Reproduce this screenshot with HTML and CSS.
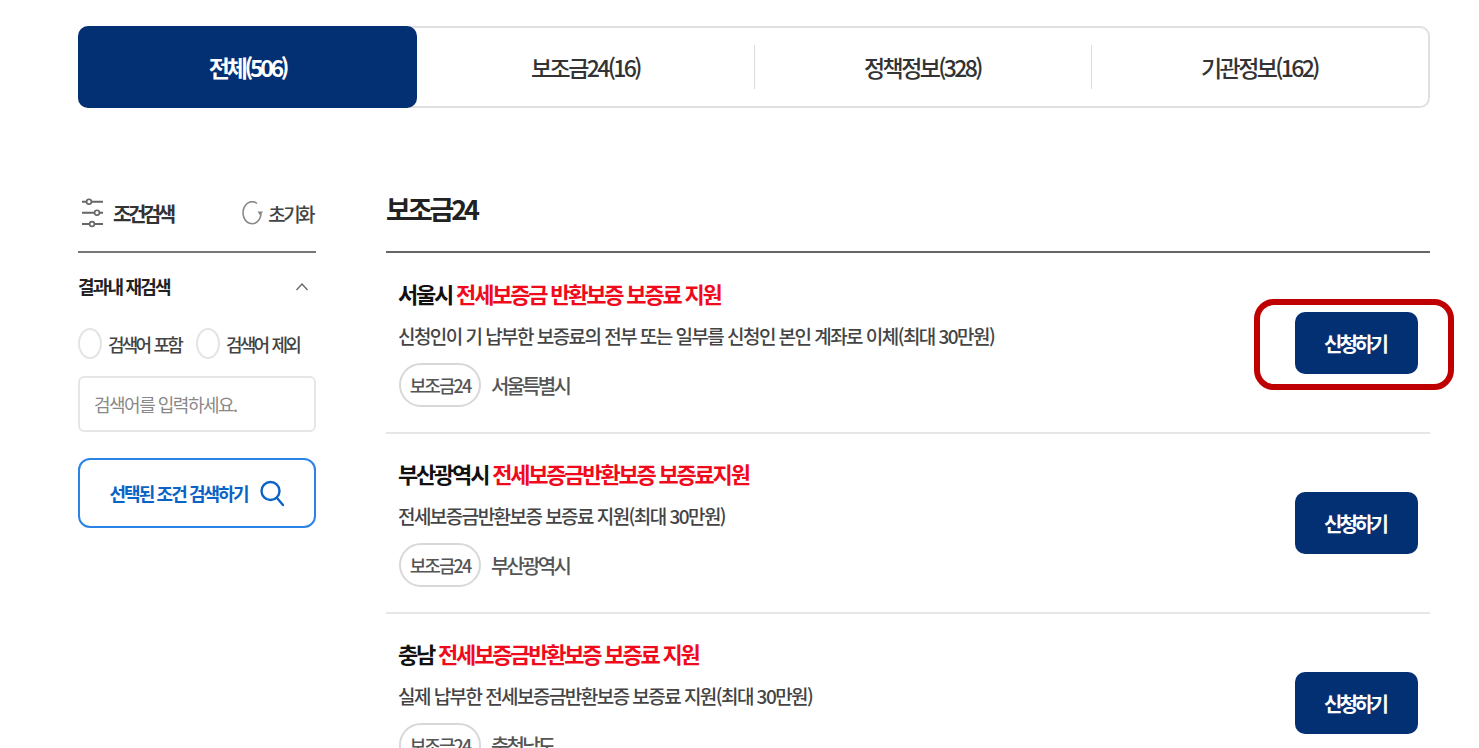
FILE: index.html
```html
<!DOCTYPE html>
<html lang="ko">
<head>
    <meta charset="UTF-8">
    <meta name="viewport" content="width=device-width, initial-scale=1.0">
    <title>보조금24 검색결과</title>
    <link rel="stylesheet" href="styles.css">
</head>
<body>
    <!-- Tabs -->
    <nav class="tabs">
        <a class="tab active" href="#all">전체(506)</a>
        <a class="tab" href="#subsidy">보조금24(16)</a>
        <a class="tab divided" href="#policy">정책정보(328)</a>
        <a class="tab divided" href="#agency">기관정보(162)</a>
    </nav>

    <div class="content">
        <!-- Sidebar -->
        <aside class="sidebar">
            <div class="filter-head">
                <h2 class="filter-title">
                    <svg class="icon-filter" width="24" height="30" viewBox="0 0 24 30" fill="none" stroke="#666" stroke-width="2">
                        <path d="M2 3.7h21M2 14.7h21M2 26h21"/>
                        <circle cx="9" cy="3.7" r="2.4" fill="#fff" stroke-width="1.6"/>
                        <circle cx="17" cy="14.7" r="2.4" fill="#fff" stroke-width="1.6"/>
                        <circle cx="12" cy="26" r="2.4" fill="#fff" stroke-width="1.6"/>
                    </svg>
                    조건검색
                </h2>
                <button class="reset" type="button">
                    <svg width="21" height="24" viewBox="0 0 21 24" fill="none" stroke="#888" stroke-width="1.6">
                        <path d="M15 2.5A9 11 0 1 0 19 13"/>
                        <path d="M15.5 10.5h5.5l-2.8 4.2z" fill="#888" stroke="none"/>
                    </svg>
                    초기화
                </button>
            </div>

            <div class="research-head">
                <h3>결과내 재검색</h3>
                <svg width="14" height="9" viewBox="0 0 14 9" fill="none" stroke="#666" stroke-width="1.3"><path d="M1.5 8L7 2l5.5 6"/></svg>
            </div>

            <div class="radio-row">
                <label class="radio"><span class="radio-dot"></span>검색어 포함</label>
                <label class="radio"><span class="radio-dot"></span>검색어 제외</label>
            </div>

            <input class="search-input" type="text" placeholder="검색어를 입력하세요.">

            <button class="search-btn" type="button">
                선택된 조건 검색하기
                <svg width="26" height="30" viewBox="0 0 26 30" fill="none" stroke="#0b63c5" stroke-width="2.4">
                    <circle cx="11.5" cy="13" r="9"/>
                    <path d="M18 20l6 7" stroke-linecap="round"/>
                </svg>
            </button>
        </aside>

        <!-- Results -->
        <main class="results">
            <h2 class="results-title">보조금24</h2>

            <div class="result-row">
                <div class="result-text">
                    <h3>서울시 <em>전세보증금 반환보증 보증료 지원</em></h3>
                    <p>신청인이 기 납부한 보증료의 전부 또는 일부를 신청인 본인 계좌로 이체(최대 30만원)</p>
                    <div class="result-meta"><span class="badge">보조금24</span><span class="region">서울특별시</span></div>
                </div>
                <a class="apply-btn" href="#apply">신청하기</a>
                <span class="highlight-box"></span>
            </div>

            <div class="result-row">
                <div class="result-text">
                    <h3>부산광역시 <em>전세보증금반환보증 보증료지원</em></h3>
                    <p>전세보증금반환보증 보증료 지원(최대 30만원)</p>
                    <div class="result-meta"><span class="badge">보조금24</span><span class="region">부산광역시</span></div>
                </div>
                <a class="apply-btn" href="#apply">신청하기</a>
            </div>

            <div class="result-row">
                <div class="result-text">
                    <h3>충남 <em>전세보증금반환보증 보증료 지원</em></h3>
                    <p>실제 납부한 전세보증금반환보증 보증료 지원(최대 30만원)</p>
                    <div class="result-meta"><span class="badge">보조금24</span><span class="region">충청남도</span></div>
                </div>
                <a class="apply-btn" href="#apply">신청하기</a>
            </div>
        </main>
    </div>
</body>
</html>
```

FILE: styles.css
```css
* {
    margin: 0;
    padding: 0;
    box-sizing: border-box;
    font-family: "Noto Sans CJK KR", "Noto Sans", sans-serif;
}

html, body {
    height: 748px;
    overflow: hidden;
}

body {
    background: #fff;
    padding: 26px 49px 0 78px;
    color: #222;
}

/* Tabs */
.tabs {
    display: flex;
    height: 82px;
    border: 2px solid #e0e0e0;
    border-radius: 10px;
}

.tab {
    position: relative;
    flex: 1;
    display: flex;
    align-items: center;
    justify-content: center;
    font-size: 23px;
    font-weight: 500;
    letter-spacing: -2.6px;
    color: #333;
    text-decoration: none;
}

.tab.active {
    flex: 0 0 339px;
    margin: -2px 0 -2px -2px;
    background: #032f73;
    color: #fff;
    font-weight: 700;
    letter-spacing: -3.3px;
    border-radius: 10px;
}

.tab.divided::before {
    content: "";
    position: absolute;
    left: 0;
    top: 17px;
    bottom: 17px;
    width: 1px;
    background: #dcdcdc;
}

/* Layout */
.content {
    display: flex;
    gap: 70px;
    margin-top: 80px;
}

/* Sidebar */
.sidebar {
    width: 238px;
    flex-shrink: 0;
}

.filter-head {
    display: flex;
    align-items: center;
    justify-content: space-between;
    height: 65px;
    padding-bottom: 13px;
    border-bottom: 2px solid #777;
}

.filter-title {
    display: flex;
    align-items: center;
    gap: 9px;
    font-size: 20px;
    font-weight: 700;
    letter-spacing: -3.5px;
    color: #333;
}

.icon-filter {
    margin-left: 2px;
}

.reset {
    display: flex;
    align-items: center;
    gap: 5px;
    margin-right: 3px;
    border: none;
    background: none;
    font-size: 19px;
    font-weight: 500;
    letter-spacing: -2.6px;
    color: #444;
}

.research-head {
    display: flex;
    align-items: center;
    justify-content: space-between;
    padding: 20px 7px 0 0;
}

.research-head h3 {
    font-size: 18px;
    font-weight: 700;
    letter-spacing: -1.8px;
    color: #222;
}

.radio-row {
    display: flex;
    gap: 15px;
    margin-top: 29px;
}

.radio {
    display: flex;
    align-items: center;
    gap: 6px;
    font-size: 18px;
    font-weight: 500;
    letter-spacing: -2.8px;
    word-spacing: 2px;
    color: #444;
}

.radio-dot {
    width: 24px;
    height: 31px;
    border: 2px solid #e4e4e4;
    border-radius: 50%;
}

.search-input {
    display: block;
    width: 100%;
    height: 56px;
    margin-top: 17px;
    padding: 0 14px;
    border: 2px solid #e6e6e6;
    border-radius: 6px;
    font-size: 18px;
    letter-spacing: -1.5px;
}

.search-input::placeholder {
    color: #888;
}

.search-btn {
    display: flex;
    align-items: center;
    justify-content: center;
    gap: 11px;
    width: 100%;
    height: 70px;
    margin-top: 26px;
    background: #fff;
    border: 2px solid #2b83e6;
    border-radius: 12px;
    font-size: 18px;
    font-weight: 700;
    letter-spacing: -1.9px;
    color: #0b63c5;
}

/* Results */
.results {
    flex: 1;
}

.results-title {
    height: 65px;
    margin-bottom: 1px;
    border-bottom: 2px solid #666;
    font-size: 27px;
    font-weight: 700;
    letter-spacing: -3.1px;
    line-height: 42px;
    color: #222;
}

.result-row {
    position: relative;
    display: flex;
    align-items: flex-start;
    justify-content: space-between;
    height: 180px;
    padding: 21px 12px 0;
    border-bottom: 2px solid #e6e6e6;
}

.result-text h3 {
    font-size: 22px;
    font-weight: 700;
    letter-spacing: -2.2px;
    line-height: 36px;
    color: #111;
}

.result-text em {
    font-style: normal;
    color: #ef0a1c;
}

.result-text p {
    margin-top: 10px;
    font-size: 19px;
    font-weight: 500;
    letter-spacing: -1.55px;
    line-height: 30px;
    color: #444;
}

.result-meta {
    display: flex;
    align-items: center;
    gap: 10px;
    margin-top: 12px;
    margin-left: 1px;
}

.badge {
    display: flex;
    align-items: center;
    justify-content: center;
    width: 82px;
    height: 44px;
    border: 2px solid #d8d8d8;
    border-radius: 22px;
    font-size: 18px;
    font-weight: 500;
    letter-spacing: -1.9px;
    color: #555;
}

.region {
    font-size: 20px;
    font-weight: 500;
    letter-spacing: -2.8px;
    color: #555;
}

.apply-btn {
    display: flex;
    align-items: center;
    justify-content: center;
    width: 123px;
    height: 62px;
    margin-top: 37px;
    padding-right: 3px;
    background: #032f73;
    border-radius: 10px;
    font-size: 20px;
    font-weight: 700;
    letter-spacing: -2.9px;
    color: #fff;
    text-decoration: none;
}

/* Annotation drawn over the first button */
.highlight-box {
    position: absolute;
    top: 45px;
    left: 868px;
    width: 200px;
    height: 91px;
    border: 6px solid #c00000;
    border-radius: 20px;
}
```
